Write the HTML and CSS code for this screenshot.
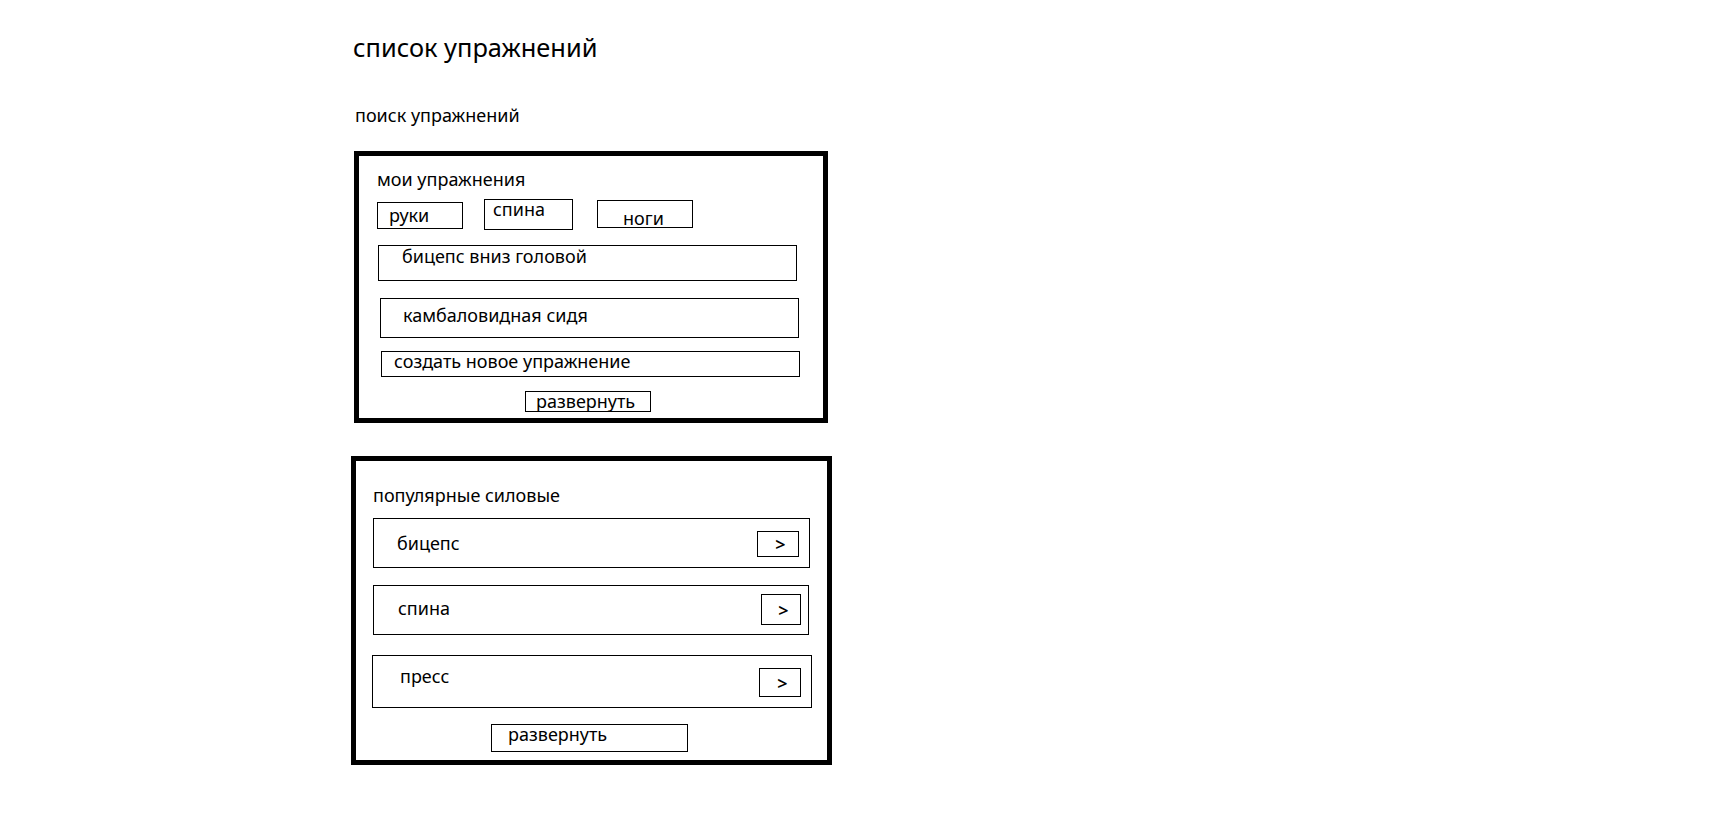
FILE: index.html
```html
<!DOCTYPE html>
<html lang="ru">
<head>
<meta charset="utf-8">
<title>список упражнений</title>
<link rel="stylesheet" href="styles.css">
</head>
<body>
<div class="page">
  <h1 class="title">список упражнений</h1>
  <div class="search">поиск упражнений</div>

  <section class="card card-mine">
    <div class="card-title mine-title">мои упражнения</div>
    <div class="chips">
      <div class="chip chip-arms">руки</div>
      <div class="chip chip-back">спина</div>
      <div class="chip chip-legs">ноги</div>
    </div>
    <div class="item item-1">бицепс вниз головой</div>
    <div class="item item-2">камбаловидная сидя</div>
    <div class="item item-3">создать новое упражнение</div>
    <div class="expand expand-1">развернуть</div>
  </section>

  <section class="card card-popular">
    <div class="card-title popular-title">популярные силовые</div>
    <div class="row row-1"><span class="label">бицепс</span><span class="go">&gt;</span></div>
    <div class="row row-2"><span class="label">спина</span><span class="go">&gt;</span></div>
    <div class="row row-3"><span class="label">пресс</span><span class="go">&gt;</span></div>
    <div class="expand expand-2">развернуть</div>
  </section>
</div>
</body>
</html>
```

FILE: styles.css
```css
* { box-sizing: border-box; }
html, body { margin: 0; padding: 0; background: #fff; }
body {
  font-family: "Noto Sans", "Open Sans", sans-serif;
  font-size: 18px;
  line-height: 18px;
  color: #000;
}
.page {
  padding: 34px 0 0 351px;
}
.title {
  margin: 0 0 0 2px;
  font-size: 25.4px;
  line-height: 26px;
  font-weight: 400;
}
.search {
  margin: 46px 0 0 4px;
}

.card {
  border: 5px solid #000;
  display: flex;
  flex-direction: column;
  align-items: flex-start;
}
.card-mine {
  margin: 27px 0 0 3px;
  width: 474px;
  height: 272px;
}
.card-popular {
  margin: 33px 0 0 0;
  width: 481px;
  height: 309px;
}
.mine-title { margin: 14px 0 0 18px; }
.popular-title { margin: 25px 0 0 17px; }

.chips {
  display: flex;
  align-items: flex-start;
  margin: 11px 0 0 18px;
}
.chip {
  border: 1px solid #000;
}
.chip-arms { margin-top: 3px; width: 86px; height: 27px; padding: 3px 0 0 11px; }
.chip-back { margin-left: 21px; width: 89px; height: 31px; padding: 0 0 0 8px; }
.chip-legs { margin: 1px 0 0 24px; width: 96px; height: 28px; padding: 8px 0 0 25px; }

.item {
  border: 1px solid #000;
  width: 419px;
}
.item-1 { margin: 15px 0 0 19px; height: 36px; padding: 1px 0 0 23px; }
.item-2 { margin: 17px 0 0 21px; height: 40px; padding: 7px 0 0 22px; }
.item-3 { margin: 13px 0 0 22px; height: 26px; padding: 0 0 0 12px; }

.expand {
  border: 1px solid #000;
}
.expand-1 { margin: 14px 0 0 166px; width: 126px; height: 21px; padding: 0 0 0 10px; }
.expand-2 { margin: 16px 0 0 135px; width: 197px; height: 28px; padding: 0 0 0 16px; }

.row {
  border: 1px solid #000;
  display: flex;
  align-items: flex-start;
}
.row .go {
  margin-left: auto;
  border: 1px solid #000;
  display: flex;
  align-items: center;
  justify-content: center;
  padding-left: 5px;
  font-size: 18px;
  font-weight: 600;
}
.row-1 { margin: 14px 0 0 17px; width: 437px; height: 50px; padding: 0 10px 0 23px; }
.row-1 .label { margin-top: 15px; }
.row-1 .go { margin-top: 12px; width: 42px; height: 26px; }
.row-2 { margin: 17px 0 0 17px; width: 436px; height: 50px; padding: 0 7px 0 24px; }
.row-2 .label { margin-top: 13px; }
.row-2 .go { margin-top: 8px; width: 40px; height: 31px; }
.row-3 { margin: 20px 0 0 16px; width: 440px; height: 53px; padding: 0 10px 0 27px; }
.row-3 .label { margin-top: 11px; }
.row-3 .go { margin-top: 12px; width: 42px; height: 29px; }
```
